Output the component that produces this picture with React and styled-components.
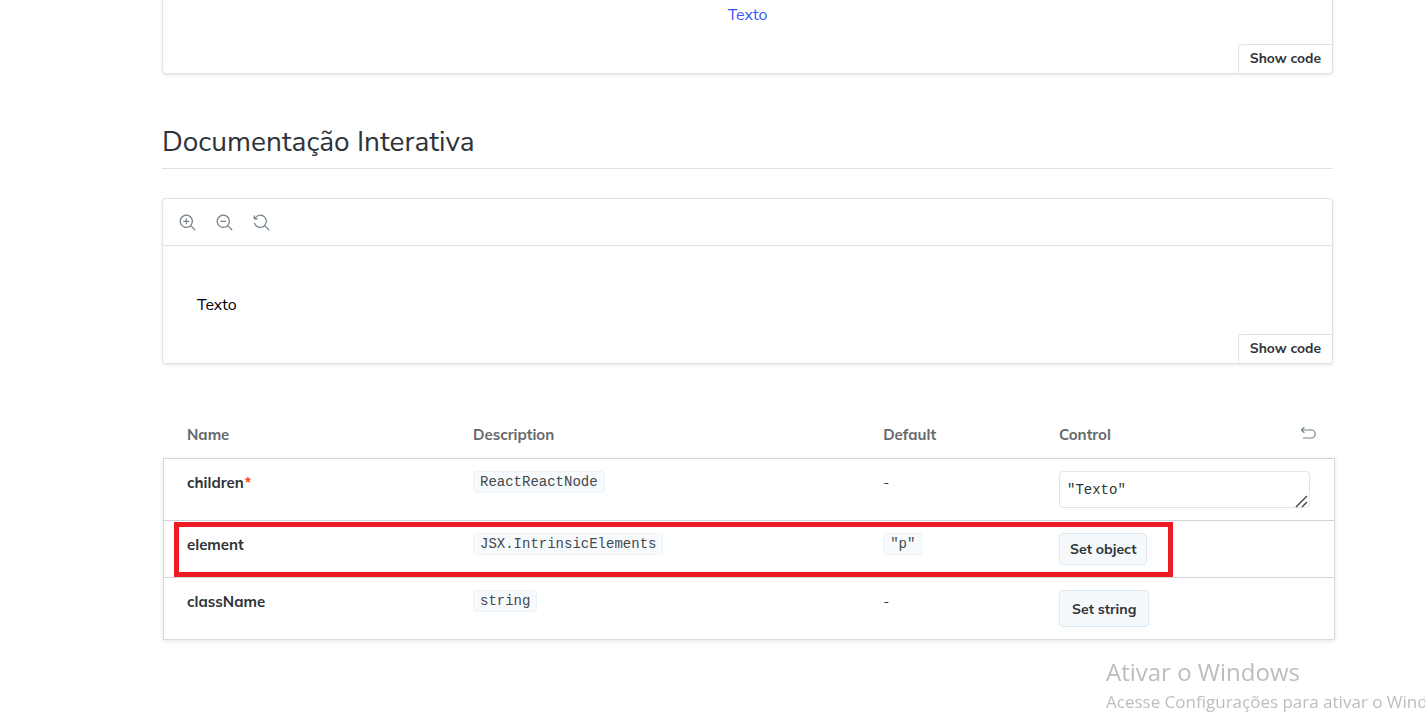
import React from "react";
import styled, { createGlobalStyle } from "styled-components";

const sans = '"Nunito Sans", Lato, "Open Sans", sans-serif';
const rounded = 'Mulish, Lato, "Open Sans", sans-serif';
const mono = '"Courier New", "Liberation Mono", monospace';
const line = "#dde4e8";

const GlobalStyle = createGlobalStyle`
  *, *::before, *::after { box-sizing: border-box; }
  html, body { margin: 0; background: #fff; }
  body { font-family: ${sans}; font-size: 16px; color: #2e3438; overflow: hidden; }
`;

const Page = styled.main`
  padding: 0 92px 80px 162px;
`;

const Card = styled.section`
  position: relative;
  border: 1px solid ${line};
  border-radius: 4px;
  background: #fff;
  box-shadow: 0 1px 3px rgba(0, 0, 0, 0.1);
`;

const ClippedCard = styled(Card)`
  height: 74px;
  border-top: 0;
  border-radius: 0 0 4px 4px;
`;

const Story = styled.div`
  height: ${(p) => (p.$centered ? "30px" : "117px")};
  padding: 0 34px;
  display: flex;
  align-items: center;
  justify-content: ${(p) => (p.$centered ? "center" : "flex-start")};
  line-height: 24px;
  color: ${(p) => (p.$centered ? "#3557ff" : "#000")};
`;

const ShowCode = styled.button`
  position: absolute;
  right: 0;
  bottom: 0;
  height: 29px;
  padding: 0 11px;
  border: 1px solid ${line};
  border-width: 1px 0 0 1px;
  border-radius: 4px 0 4px 0;
  background: #fff;
  color: #2e3438;
  font: 700 14px/16px ${sans};
`;

const Heading = styled.h2`
  margin: 49px 0 29px;
  padding-bottom: 6px;
  border-bottom: 1px solid ${line};
  font-size: 28px;
  line-height: 39px;
  font-weight: 400;
`;

const Toolbar = styled.div`
  display: flex;
  align-items: center;
  gap: 20px;
  height: 47px;
  padding: 0 16px;
  border-bottom: 1px solid ${line};
`;

const IconButton = styled.button`
  display: flex;
  padding: 0;
  border: 0;
  background: none;
  color: #73828c;
`;

const ArgsTable = styled.table`
  width: calc(100% + 1px);
  margin: 47px 0 0 1px;
  table-layout: fixed;
  border-spacing: 0;
  border-collapse: separate;
  text-align: left;
  font-family: ${rounded};
`;

const HeadCell = styled.th`
  width: ${(p) => p.$width};
  height: 47px;
  padding: 0 17px;
  font-size: 15px;
  line-height: 20px;
  font-weight: 700;
  color: #65696c;
  &:first-child { padding-left: 24px; }
`;

const ControlHead = styled.div`
  display: flex;
  align-items: flex-start;
  justify-content: space-between;
`;

const Body = styled.tbody`
  box-shadow: 0 1px 5px rgba(0, 0, 0, 0.1);
`;

const Row = styled.tr`
  position: relative;
`;

const Cell = styled.td`
  padding: 12px 17px;
  border-top: 1px solid #cdd6db;
  vertical-align: top;
  font-size: 14px;
  line-height: 22px;
  &:first-child {
    padding-left: 23px;
    border-left: 1px solid #d3dbdf;
    font-size: 15px;
    line-height: 24px;
    font-weight: 700;
  }
  &:last-child {
    padding-right: 24px;
    border-right: 1px solid #d3dbdf;
  }
  ${Row}:last-child & { border-bottom: 1px solid #d3dbdf; }
`;

const Required = styled.span`
  color: #ff4400;
  font-family: ${mono};
  font-size: 14px;
`;

const Tag = styled.code`
  display: block;
  width: fit-content;
  height: 22px;
  padding: 0 6px;
  border: 1px solid #ecf4f9;
  border-radius: 3px;
  background: #f7fafc;
  color: #43484c;
  font: 14px/20px ${mono};
`;

const TextArea = styled.textarea`
  display: block;
  width: 100%;
  height: 37px;
  padding: 8px 7px;
  border: 1px solid #dde6e8;
  border-radius: 4px;
  outline: 0;
  background: #fff;
  color: #2e3438;
  font: 14px/20px ${mono};
  overflow: hidden;
  resize: none;
`;

const Field = styled.label`
  display: block;
  position: relative;
`;

const Grip = styled.svg`
  position: absolute;
  right: 1px;
  bottom: 0;
`;

const SetButton = styled.button`
  display: block;
  height: ${(p) => (p.$large ? "37px" : "32px")};
  padding: 0 ${(p) => (p.$large ? "12px" : "10px")};
  border: 1px solid #d9e8f2;
  border-radius: 4px;
  background: #f5f9fc;
  color: #2e3438;
  font: 700 14px/20px ${rounded};
`;

const Highlight = styled.div`
  position: absolute;
  top: 2px;
  bottom: 0;
  left: 11px;
  right: 162px;
  border: 5px solid #ed1c24;
  pointer-events: none;
`;

const Watermark = styled.aside`
  position: fixed;
  right: 0;
  bottom: 0;
  width: 319px;
  height: 65px;
  overflow: hidden;
  white-space: nowrap;
  color: #bdbdbd;
  font-family: "Segoe UI", "Open Sans", sans-serif;
  pointer-events: none;
`;

const WatermarkTitle = styled.div`
  font-size: 24px;
  line-height: 32px;
`;

const WatermarkText = styled.div`
  font-size: 17px;
  line-height: 28px;
`;

const iconPaths = {
  "Zoom in": [
    "M6 3.5a.5.5 0 01.5.5v1.5H8a.5.5 0 010 1H6.5V8a.5.5 0 01-1 0V6.5H4a.5.5 0 010-1h1.5V4a.5.5 0 01.5-.5z",
    "M9.544 10.206a5.5 5.5 0 11.662-.662.5.5 0 01.148.102l3 3a.5.5 0 01-.708.708l-3-3a.5.5 0 01-.102-.148zM10.5 6a4.5 4.5 0 10-9 0 4.5 4.5 0 009 0z",
  ],
  "Zoom out": [
    "M4 5.5a.5.5 0 000 1h4a.5.5 0 000-1H4z",
    "M9.544 10.206a5.5 5.5 0 11.662-.662.5.5 0 01.148.102l3 3a.5.5 0 01-.708.708l-3-3a.5.5 0 01-.102-.148zM10.5 6a4.5 4.5 0 10-9 0 4.5 4.5 0 009 0z",
  ],
  "Reset zoom": [
    "M1.5 2.837V1.5a.5.5 0 00-1 0V4a.5.5 0 00.5.5h2.5a.5.5 0 000-1H2.258a4.5 4.5 0 11-.496 4.016.5.5 0 10-.942.337 5.502 5.502 0 008.724 2.353.5.5 0 00.102.148l3 3a.5.5 0 00.708-.708l-3-3a.5.5 0 00-.148-.102A5.5 5.5 0 101.5 2.837z",
  ],
};

function ZoomButton({ label }) {
  return (
    <IconButton type="button" aria-label={label}>
      <svg width="17" height="17" viewBox="0 0 14 14" fill="currentColor" fillRule="evenodd">
        {iconPaths[label].map((d) => (
          <path key={d} d={d} />
        ))}
      </svg>
    </IconButton>
  );
}

export default function App() {
  return (
    <>
      <GlobalStyle />
      <Page>
        <ClippedCard>
          <Story $centered>Texto</Story>
          <ShowCode type="button">Show code</ShowCode>
        </ClippedCard>

        <Heading>Documentação Interativa</Heading>

        <Card>
          <Toolbar>
            <ZoomButton label="Zoom in" />
            <ZoomButton label="Zoom out" />
            <ZoomButton label="Reset zoom" />
          </Toolbar>
          <Story>Texto</Story>
          <ShowCode type="button">Show code</ShowCode>
        </Card>

        <ArgsTable>
          <thead>
            <tr>
              <HeadCell $width="25%">Name</HeadCell>
              <HeadCell $width="35%">Description</HeadCell>
              <HeadCell $width="15%">Default</HeadCell>
              <HeadCell $width="25%">
                <ControlHead>
                  Control
                  <IconButton type="button" aria-label="Reset controls">
                    <svg width="18" height="16" viewBox="0 0 18 16" fill="none" stroke="currentColor" strokeWidth="1.2" strokeLinecap="round" strokeLinejoin="round">
                      <path d="M4 2.5 1.4 5 4 7.5M1.6 5h9.6a4 4 0 0 1 0 8H3.4" />
                    </svg>
                  </IconButton>
                </ControlHead>
              </HeadCell>
            </tr>
          </thead>
          <Body>
            <Row>
              <Cell>children<Required>*</Required></Cell>
              <Cell><Tag>ReactReactNode</Tag></Cell>
              <Cell>-</Cell>
              <Cell>
                <Field>
                  <TextArea aria-label="children" rows={1} defaultValue={'"Texto"'} />
                  <Grip width="14" height="14" viewBox="0 0 14 14" stroke="#555" strokeWidth="1.6" aria-hidden="true">
                    <path d="M1 13 12 2M7 13l5-5" />
                  </Grip>
                </Field>
              </Cell>
            </Row>
            <Row>
              <Cell>
                element
                <Highlight />
              </Cell>
              <Cell><Tag>JSX.IntrinsicElements</Tag></Cell>
              <Cell><Tag>"p"</Tag></Cell>
              <Cell><SetButton type="button">Set object</SetButton></Cell>
            </Row>
            <Row>
              <Cell>className</Cell>
              <Cell><Tag>string</Tag></Cell>
              <Cell>-</Cell>
              <Cell><SetButton type="button" $large>Set string</SetButton></Cell>
            </Row>
          </Body>
        </ArgsTable>
      </Page>

      <Watermark>
        <WatermarkTitle>Ativar o Windows</WatermarkTitle>
        <WatermarkText>Acesse Configurações para ativar o Windows.</WatermarkText>
      </Watermark>
    </>
  );
}
